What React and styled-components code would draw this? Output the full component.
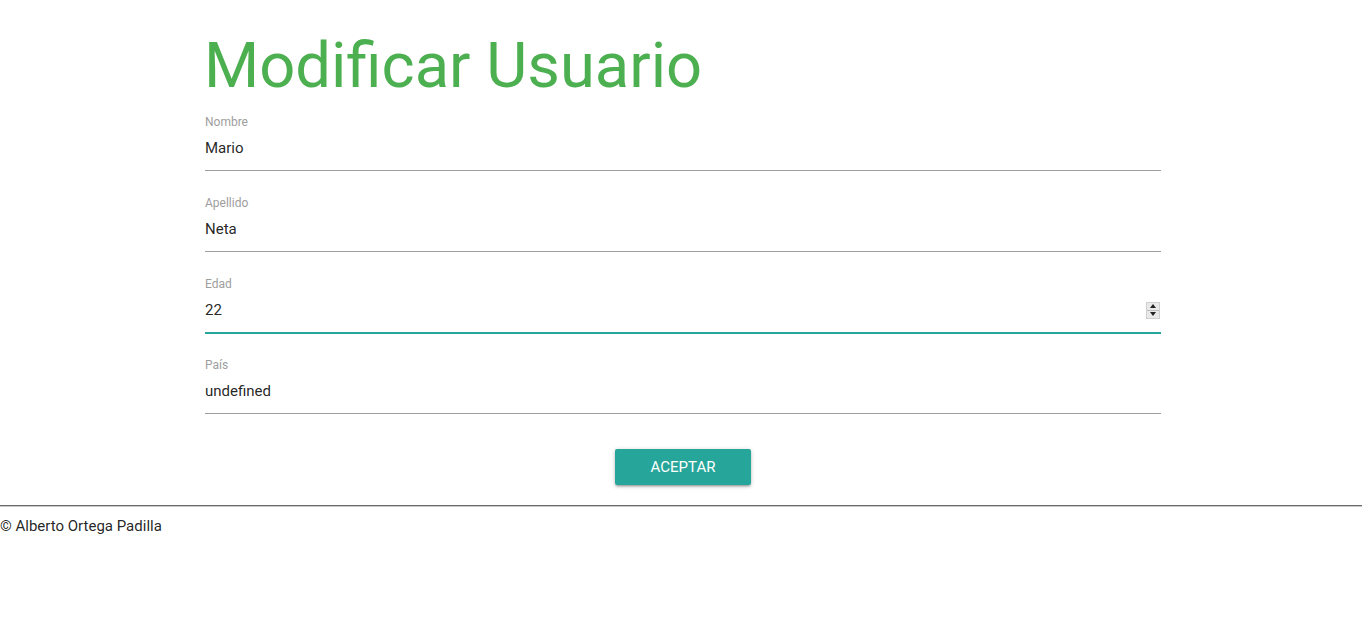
import React from "react";
import styled, { createGlobalStyle } from "styled-components";

const Global = createGlobalStyle`
  html, body { margin: 0; padding: 0; background: #fff; }
  body { font-family: Roboto, "Liberation Sans", sans-serif; color: rgba(0,0,0,0.87); }
`;

const Main = styled.main`
  width: 956px;
  margin-left: 205px;
  padding-top: 31px;
`;

const Title = styled.h1`
  margin: 0 0 14px;
  font-size: 63.3px;
  line-height: 1.1;
  font-weight: 400;
  color: #4caf50;
  margin-left: -1px;
`;

const Field = styled.div`
  position: relative;
  margin-bottom: 25px;
`;

const Label = styled.label`
  display: block;
  font-size: 12px;
  line-height: 14px;
  color: #9e9e9e;
  margin-bottom: 7px;
`;

const Value = styled.div`
  font-size: 15px;
  line-height: 24px;
  height: 24px;
  padding-bottom: 10px;
  border-bottom: 1px solid #9e9e9e;
  box-shadow: ${(p) => (p.$active ? "0 1px 0 0 #26a69a" : "none")};
  border-bottom-color: ${(p) => (p.$active ? "#26a69a" : "#9e9e9e")};
  color: rgba(0,0,0,0.87);
`;

const Spinner = styled.div`
  position: absolute;
  right: 1px;
  top: 25px;
  width: 14px;
  height: 17px;
  display: flex;
  flex-direction: column;
  background: #e9e9e9;
  border: 1px solid #cfcfcf;
  box-sizing: border-box;
`;

const SpinHalf = styled.div`
  flex: 1;
  display: flex;
  align-items: center;
  justify-content: center;
  & + & { border-top: 1px solid #bdbdbd; }
`;

const Arrow = styled.span`
  width: 0;
  height: 0;
  border-left: 3px solid transparent;
  border-right: 3px solid transparent;
  ${(p) =>
    p.$up
      ? "border-bottom: 4px solid #222;"
      : "border-top: 4px solid #222;"}
`;

const Actions = styled.div`
  display: flex;
  justify-content: center;
  padding-top: 10px;
`;

const Button = styled.button`
  width: 136px;
  height: 36px;
  border: none;
  border-radius: 2px;
  background: #26a69a;
  color: #fff;
  font-family: Roboto, "Liberation Sans", sans-serif;
  font-size: 15px;
  text-transform: uppercase;
  letter-spacing: 0;
  box-shadow: 0 2px 2px 0 rgba(0,0,0,0.14), 0 3px 1px -2px rgba(0,0,0,0.12), 0 1px 5px 0 rgba(0,0,0,0.2);
  cursor: pointer;
`;

const Rule = styled.hr`
  margin: 20px 0 0;
  border: none;
  border-top: 1px solid #6b6b6b;
  border-bottom: 1px solid #c8c8c8;
  height: 0;
`;

const Footer = styled.footer`
  font-size: 15px;
  line-height: 20px;
  padding-top: 9px;
  color: rgba(0,0,0,0.87);
`;

const fields = [
  { label: "Nombre", value: "Mario" },
  { label: "Apellido", value: "Neta" },
  { label: "Edad", value: "22", active: true, number: true },
  { label: "País", value: "undefined" },
];

export default function App() {
  return (
    <>
      <Global />
      <Main>
        <Title>Modificar Usuario</Title>
        {fields.map((f) => (
          <Field key={f.label}>
            <Label>{f.label}</Label>
            <Value $active={f.active}>{f.value}</Value>
            {f.number && (
              <Spinner>
                <SpinHalf><Arrow $up /></SpinHalf>
                <SpinHalf><Arrow /></SpinHalf>
              </Spinner>
            )}
          </Field>
        ))}
        <Actions>
          <Button>Aceptar</Button>
        </Actions>
      </Main>
      <Rule />
      <Footer>© Alberto Ortega Padilla</Footer>
    </>
  );
}
